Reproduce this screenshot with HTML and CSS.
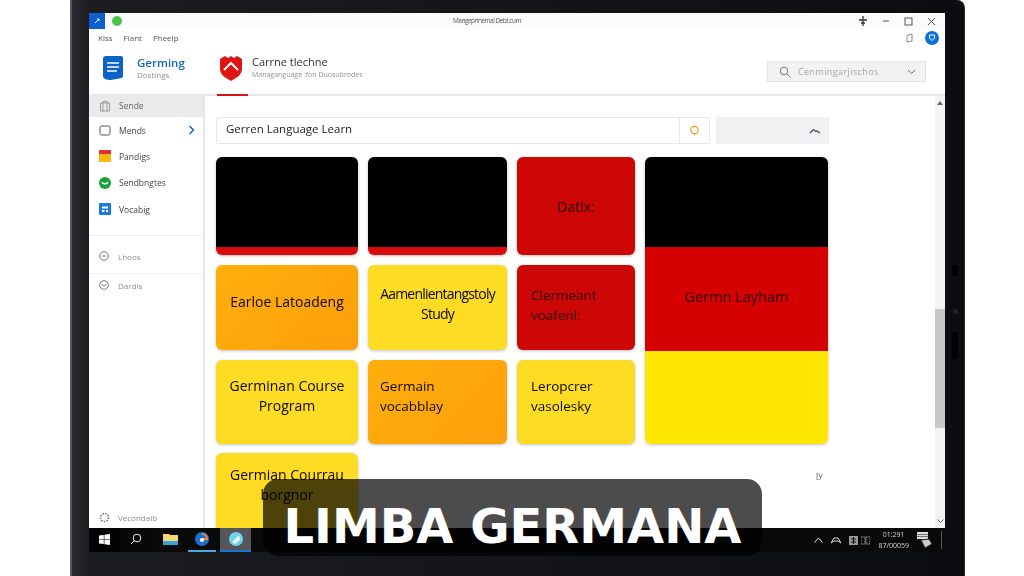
FILE: index.html
```html
<!DOCTYPE html>
<html lang="en">
<head>
  <meta charset="UTF-8" />
  <title>Limba Germana</title>
  <link rel="stylesheet" href="styles.css">
</head>
<body>
  <div class="laptop">
    <span class="port port-small"></span>
    <span class="port port-dot"></span>
    <span class="port port-long"></span>
    <div class="screen">
      <div class="titlebar">
        <div class="title-left">
          <span class="app-chip"><svg width="8" height="8" viewBox="0 0 8 8"><path d="M2 6 6 2M4 2h2v2" stroke="#fff" fill="none"/></svg></span>
          <span class="green-dot"></span>
        </div>
        <div class="title-text">Mangeprinemal Debt.cum</div>
        <div class="title-right">
          <svg width="10" height="10" viewBox="0 0 10 10"><path d="M5 0v10M1 4h8M3 7h4" stroke="#333" stroke-width="1.3" fill="none"/></svg>
          <svg width="8" height="8" viewBox="0 0 8 8"><path d="M1 4h6" stroke="#555" stroke-width="1"/></svg>
          <svg width="9" height="9" viewBox="0 0 9 9"><rect x="1" y="1" width="7" height="7" stroke="#555" fill="none"/></svg>
          <svg width="9" height="9" viewBox="0 0 9 9"><path d="M1 1l7 7M8 1 1 8" stroke="#555" fill="none"/></svg>
        </div>
      </div>

      <div class="menubar">
        <div class="menu-items"><span>Kiss</span><span>Fiant</span><span>Pheelp</span></div>
        <div class="menu-right">
          <svg width="9" height="10" viewBox="0 0 9 10"><path d="M2 2.500 7 1v7L2 9z" stroke="#888" fill="none"/></svg>
          <span class="avatar"><svg width="6" height="7" viewBox="0 0 6 7"><path d="M.5 1h5v3L3 6.500.5 4z" stroke="#fff" fill="none"/></svg></span>
        </div>
      </div>

      <div class="header">
        <div class="brand">
          <svg width="20" height="24" viewBox="0 0 20 24"><path d="M3 0h15a2 2 0 0 1 2 2v18c0 2-2 2-4 2.500L8 24c-4 0-8-1-8-4V3a3 3 0 0 1 3-3z" fill="#0b63c5"/><path d="M4 7h12M4 11h12M4 15h10" stroke="#fff" stroke-width="1.600"/></svg>
          <div>
            <div class="brand-name">Germing</div>
            <div class="brand-sub">Dostings</div>
          </div>
        </div>
        <div class="course-tab">
          <svg width="24" height="27" viewBox="0 0 24 27"><path d="M1 4 6 1l3 2 3-2 3 2 3-2 5 3v10c0 6-6 9-11 12C7 23 1 20 1 14z" fill="#dc1414"/><path d="M5 15l7-7 7 7" stroke="#fff" stroke-width="2" fill="none"/></svg>
          <div>
            <div class="course-name">Carrne tlechne</div>
            <div class="course-sub">Managanguage :fon Duosubrodes</div>
          </div>
        </div>
        <div class="header-search">
          <svg width="12" height="12" viewBox="0 0 12 12"><circle cx="5" cy="5" r="3.800" stroke="#777" fill="none"/><path d="M8 8l3.500 3.500" stroke="#777"/></svg>
          <span>Cenmingarjischos</span>
          <svg class="chev" width="9" height="6" viewBox="0 0 9 6"><path d="M1 1l3.500 3.500L8 1" stroke="#666" fill="none"/></svg>
        </div>
      </div>

      <div class="app">
        <aside class="sidebar">
          <div class="side-item active"><svg width="12" height="12" viewBox="0 0 12 12"><path d="M1.500 3h9v8h-9zM4 3V1.500h4V3M4 3v8M8 3v8" stroke="#999" fill="none"/></svg><span>Sende</span></div>
          <div class="side-item dark"><svg width="12" height="11" viewBox="0 0 12 11"><rect x="1" y="1" width="10" height="9" rx="1.500" stroke="#555" fill="none"/></svg><span>Mends</span><svg class="side-chev" width="7" height="10" viewBox="0 0 7 10"><path d="M1.500 1l4 4-4 4" stroke="#1565c0" stroke-width="1.500" fill="none"/></svg></div>
          <div class="side-item dark"><span class="flag-icon"></span><span>Pandigs</span></div>
          <div class="side-item dark"><svg width="12" height="12" viewBox="0 0 12 12"><circle cx="6" cy="6" r="6" fill="#17a33b"/><path d="M3 5c1 2.500 5 2.500 6 0" stroke="#fff" stroke-width="1.500" fill="none"/></svg><span>Sendbngtes</span></div>
          <div class="side-item dark"><svg width="12" height="12" viewBox="0 0 12 12"><rect width="12" height="12" rx="1" fill="#1a7ae2"/><path d="M3 3.500h6v2H3zM3 7h2.500v2H3zM7 7h2v2H7z" fill="#fff"/></svg><span>Vocabig</span></div>
          <div class="side-group">
            <div class="side-item small"><svg width="10" height="10" viewBox="0 0 10 10"><circle cx="5" cy="5" r="4.300" stroke="#777" fill="none"/><path d="M3 5h4" stroke="#777"/></svg><span>Lhoos</span></div>
          </div>
          <div class="side-group second">
            <div class="side-item small"><svg width="10" height="10" viewBox="0 0 10 10"><circle cx="5" cy="5" r="4.300" stroke="#777" fill="none"/><path d="M2.500 4 5 6l2.500-2" stroke="#777" fill="none"/></svg><span>Dardis</span></div>
          </div>
          <div class="side-foot"><svg width="11" height="11" viewBox="0 0 11 11"><circle cx="5.500" cy="5.500" r="4" stroke="#777" stroke-width="1.600" stroke-dasharray="1.500 1.200" fill="none"/></svg><span>Vecondalb</span></div>
        </aside>

        <main class="main">
          <div class="search-row">
            <div class="search-box">
              <span class="search-text">Gerren Language Learn</span>
              <span class="search-btn"><svg width="11" height="11" viewBox="0 0 11 11"><circle cx="5.500" cy="5" r="3.700" stroke="#f09a10" stroke-width="1.200" fill="none"/><path d="M5.500 9v1.500" stroke="#f09a10"/></svg></span>
            </div>
            <div class="sort-box"><svg width="12" height="6" viewBox="0 0 12 6"><path d="M1 5 4.500 1.500 7 3.500 8 3l3 2" stroke="#445" stroke-width="1.100" fill="none"/></svg></div>
          </div>

          <div class="cards">
            <div class="card black"></div>
            <div class="card black"></div>
            <div class="card red">Datlx:</div>
            <div class="card flag">
              <div class="flag-black"></div>
              <div class="flag-red">Germn Layham</div>
              <div class="flag-yellow"></div>
            </div>
            <div class="card raised orange">Earloe Latoadeng</div>
            <div class="card raised-more yellow tight">Aamenlientangstoly Study</div>
            <div class="card raised-more red left">Clermeant voafenl:</div>
            <div class="card raised yellow">Germinan Course Program</div>
            <div class="card raised orange left">Germain vocabblay</div>
            <div class="card raised yellow left">Leropcrer vasolesky</div>
            <div class="card yellow last">Germian Courrau borgnor</div>
          </div>
          <span class="cursor-mark">[y</span>
        </main>

        <div class="scrollbar">
          <svg width="6" height="4" viewBox="0 0 6 4"><path d="M0 4 3 0l3 4z" fill="#666"/></svg>
          <div class="thumb"></div>
          <svg width="7" height="4" viewBox="0 0 7 4"><path d="M.5.500 3.500 3.500 6.500.5" stroke="#666" fill="none"/></svg>
        </div>
      </div>

      <div class="taskbar">
        <div class="task-btn start"><svg width="11" height="11" viewBox="0 0 11 11"><path d="M0 1.600 4.800.9v4.300H0zM5.400.8 11 0v5.200H5.400zM0 5.800h4.800v4.300L0 9.400zM5.400 5.800H11V11l-5.600-.8z" fill="#fff"/></svg></div>
        <div class="task-btn search"><svg width="12" height="12" viewBox="0 0 12 12"><circle cx="7" cy="5" r="3.800" stroke="#eee" fill="none"/><path d="M4.200 7.800 1 11" stroke="#eee"/></svg></div>
        <div class="task-btn folder"><svg width="15" height="12" viewBox="0 0 15 12"><path d="M0 1h6l1 1h8v10H0z" fill="#f5d774"/><path d="M0 8h15v4H0z" fill="#3aa0d8"/></svg></div>
        <div class="task-btn edge running"><svg width="14" height="14" viewBox="0 0 14 14"><circle cx="7" cy="7" r="7" fill="#1b6fd0"/><path d="M7 2a5 5 0 0 1 5 5H6" stroke="#f08a24" stroke-width="2" fill="none"/><circle cx="7" cy="8" r="2" fill="#fff"/></svg></div>
        <div class="task-btn globe running current"><svg width="14" height="14" viewBox="0 0 14 14"><circle cx="7" cy="7" r="7" fill="#6fd3ee"/><path d="M3 10 10 3l1 5-5 4z" fill="#e8f7fc"/></svg></div>
        <div class="tray">
          <svg width="9" height="6" viewBox="0 0 9 6"><path d="M.5 5.500 4.500 1l4 4.500" stroke="#eee" fill="none"/></svg>
          <svg width="10" height="7" viewBox="0 0 10 7"><path d="M0 6 3 1h4l3 5-3-2H3z" stroke="#ddd" fill="none"/></svg>
          <svg width="9" height="9" viewBox="0 0 9 9"><path d="M0 0h9v9H0z" fill="#999"/><path d="M2 3h5M2 6h5M4.500 1v7" stroke="#111"/></svg>
          <svg class="tray-near" width="9" height="9" viewBox="0 0 9 9"><path d="M0 1h4v7H0zM5 1h4v7H5z" fill="none" stroke="#aaa" stroke-dasharray="1 .6"/></svg>
          <div class="clock"><span>01:291</span><span>87/00059</span></div>
          <svg width="16" height="18" viewBox="0 0 16 18"><path d="M0 1h11v7H0z" fill="#ddd"/><path d="M0 3.500h11M0 5.500h11" stroke="#444" stroke-width=".7"/><path d="M4 9l8-1 3 5-7 4z" fill="#ccc" stroke="#222"/></svg>
        </div>
      </div>
    </div>
  </div>

  <div class="caption">LIMBA GERMANA</div>
</body>
</html>
```
FILE: styles.css
```css
* {
  box-sizing: border-box;
}
html, body {
  margin: 0;
  height: 576px;
  overflow: hidden;
}
body {
  position: relative;
  width: 1024px;
  background: #fff;
  font-family: "Open Sans", "Noto Sans", sans-serif;
  color: #333;
}
svg {
  display: block;
  flex: none;
}
.laptop {
  width: 895px;
  height: 576px;
  margin-left: 70px;
  padding: 13px 20px 0 19px;
  background: linear-gradient(90deg, #2a2b2f 0, #1c1d20 2%, #141518 50%, #0c0d10 100%);
  border-left: 2px solid #55565a;
  border-right: 1px solid #2c2d30;
  border-top-right-radius: 8px;
}
.laptop .screen {
  margin-left: -2px;
}
.port {
  position: absolute;
  left: 952px;
  width: 6px;
  background: #000;
  border-radius: 2px;
}
.port-small {
  top: 265px;
  height: 11px;
}
.port-dot {
  left: 953px;
  top: 309px;
  width: 5px;
  height: 5px;
  background: #24252a;
  border-radius: 50%;
}
.port-long {
  top: 332px;
  height: 27px;
}
.screen {
  width: 856px;
  height: 539px;
  display: flex;
  flex-direction: column;
  background: #fff;
  filter: blur(0.3px);
}

.titlebar {
  height: 16px;
  flex: none;
  display: flex;
  align-items: center;
  justify-content: space-between;
  background: #fbfbfb;
  position: relative;
}
.title-left {
  display: flex;
  align-items: center;
  gap: 7px;
}
.app-chip {
  width: 16px;
  height: 16px;
  background: #0b5fd0;
  display: flex;
  align-items: center;
  justify-content: center;
}
.green-dot {
  width: 10px;
  height: 10px;
  border-radius: 50%;
  background: #4cc44e;
}
.title-text {
  font-size: 6.5px;
  letter-spacing: -0.5px;
  color: #555;
  position: absolute;
  left: 364px;
  top: 3px;
}
.title-right {
  display: flex;
  align-items: center;
  gap: 14px;
  padding-right: 9px;
}

.menubar {
  height: 19px;
  flex: none;
  display: flex;
  align-items: center;
  justify-content: space-between;
  padding: 0 6px 2px 9px;
}
.menu-items {
  display: flex;
  gap: 11px;
  font-size: 8px;
  color: #555;
}
.menu-right {
  display: flex;
  align-items: center;
  gap: 11px;
}
.avatar {
  width: 14px;
  height: 14px;
  border-radius: 50%;
  background: #0d6fd8;
  display: flex;
  align-items: center;
  justify-content: center;
}

.header {
  height: 48px;
  flex: none;
  display: flex;
  align-items: flex-start;
  padding: 7px 19px 0 14px;
  border-bottom: 2px solid #e6e7e8;
}
.brand {
  display: flex;
  gap: 14px;
  width: 114px;
  padding-top: 1px;
}
.brand-name {
  font-size: 11.5px;
  font-weight: 600;
  color: #1268bd;
  line-height: 14px;
}
.brand-sub {
  font-size: 8px;
  color: #8a8f95;
  line-height: 10px;
}
.course-tab {
  display: flex;
  gap: 9px;
  height: 41px;
  padding: 0 0 0 2px;
  position: relative;
}
.course-tab::after {
  content: "";
  position: absolute;
  left: 0;
  bottom: 0;
  width: 31px;
  height: 2px;
  background: #d91616;
}
.course-name {
  font-size: 11px;
  color: #333;
  line-height: 14px;
}
.course-sub {
  font-size: 7px;
  color: #8d9094;
  line-height: 10px;
  margin-top: 1px;
}
.header-search {
  margin-left: auto;
  margin-top: 6px;
  width: 159px;
  height: 21px;
  display: flex;
  align-items: center;
  gap: 7px;
  padding: 0 9px 0 11px;
  background: #f1f2f3;
  border: 1px solid #e2e3e5;
  font-size: 9px;
  letter-spacing: 0.4px;
  color: #a4a7aa;
}
.header-search .chev {
  margin-left: auto;
}

.app {
  flex: 1;
  min-height: 0;
  display: flex;
}
.sidebar {
  width: 116px;
  flex: none;
  display: flex;
  flex-direction: column;
  border-right: 2px solid #e4e5e7;
  font-size: 8.5px;
  color: #666;
}
.side-item {
  height: 26.3px;
  flex: none;
  display: flex;
  align-items: center;
  gap: 8px;
  padding-left: 10px;
}
.side-item.active {
  height: 21px;
  padding-bottom: 2px;
  background: #e9eaec;
}
.side-item.dark {
  color: #444;
}
.side-item.small {
  height: 22px;
  color: #8a8c8f;
  font-size: 8px;
  gap: 9px;
}
.side-chev {
  margin-left: auto;
  margin-right: 8px;
}
.flag-icon {
  width: 12px;
  height: 12px;
  flex: none;
  background: linear-gradient(#e03030 33%, #fbb610 33%);
}
.side-group {
  margin-top: 13px;
  padding-top: 9px;
  border-top: 1px solid #f0f0f1;
}
.side-group.second {
  margin-top: 6px;
  padding-top: 0;
}
.side-foot {
  margin-top: auto;
  height: 22px;
  display: flex;
  align-items: center;
  gap: 8px;
  padding-left: 10px;
  font-size: 8px;
  color: #8a8c8f;
}

.main {
  flex: 1;
  min-width: 0;
  overflow: hidden;
  position: relative;
  padding: 21px 0 0 11px;
}
.search-row {
  display: flex;
  gap: 6px;
  margin-bottom: 13px;
}
.search-box {
  width: 494px;
  height: 27px;
  display: flex;
  align-items: center;
  justify-content: space-between;
  background: #fff;
  border: 1px solid #e6e7e8;
  border-radius: 2px;
  padding-left: 9px;
}
.search-text {
  font-size: 11.5px;
  color: #222;
  padding-bottom: 5px;
}
.search-btn {
  width: 30px;
  height: 100%;
  display: flex;
  align-items: center;
  justify-content: center;
  border-left: 1px solid #e6e7e8;
}
.sort-box {
  width: 113px;
  height: 27px;
  display: flex;
  align-items: center;
  justify-content: flex-end;
  padding-right: 8px;
  background: #f0f1f2;
}

.cards {
  display: grid;
  grid-template-columns: 142px 139px 118px 183px;
  grid-template-rows: 98px 85px 84px 100px;
  gap: 10px;
}
.card {
  display: flex;
  align-items: center;
  justify-content: center;
  padding: 0 12px;
  border-radius: 6px;
  text-align: center;
  font-size: 14px;
  line-height: 20px;
  color: #0c0900;
  box-shadow: 0 1px 3px rgba(0, 0, 0, 0.25);
}
.card.raised {
  padding-bottom: 12px;
}
.card.raised-more {
  padding-bottom: 7px;
}
.card.left {
  justify-content: flex-start;
  text-align: left;
  font-size: 13.5px;
}
.card.red.left,
.card.yellow.left {
  padding-left: 14px;
}
.card.tight {
  letter-spacing: -0.8px;
}
.black {
  background: linear-gradient(#000 90px, #d80a0a 90px);
}
.red {
  padding-top: 2px;
  background: #cd0606;
  color: #2a0000;
}
.orange {
  background: linear-gradient(135deg, #ffaf0c, #fd9f0a);
}
.yellow {
  background: #ffdc24;
}
.last {
  align-items: flex-start;
  margin-top: -1px;
  padding-top: 12px;
}
.flag {
  grid-column: 4;
  grid-row: 1 / span 3;
  display: flex;
  flex-direction: column;
  align-items: stretch;
  padding: 0;
  overflow: hidden;
}
.flag-black {
  height: 90px;
  background: #000;
}
.flag-red {
  height: 104px;
  display: flex;
  align-items: center;
  justify-content: center;
  padding-bottom: 4px;
  background: #d60202;
  font-size: 14.500px;
  color: #2a0000;
}
.flag-yellow {
  flex: 1;
  background: #ffe600;
}
.cursor-mark {
  position: absolute;
  left: 611px;
  top: 373px;
  font-size: 8px;
  color: #555;
}

.scrollbar {
  width: 10px;
  flex: none;
  display: flex;
  flex-direction: column;
  align-items: center;
  background: #f3f3f3;
  padding: 5px 0 5px;
}
.thumb {
  width: 100%;
  height: 119px;
  margin-top: 204px;
  margin-bottom: auto;
  background: #c8c8c8;
}

.taskbar {
  height: 24px;
  flex: none;
  display: flex;
  align-items: stretch;
  background: #0a0a0b;
}
.task-btn {
  width: 32px;
  display: flex;
  align-items: center;
  justify-content: center;
  border-bottom: 2px solid transparent;
}
.task-btn.start {
  width: 30px;
  background: #020203;
}
.task-btn.search {
  width: 33px;
  background: #060607;
}
.task-btn.folder {
  width: 36px;
}
.task-btn.running {
  width: 28px;
  border-bottom-color: #4aa8e0;
}
.task-btn.current {
  width: 31px;
  margin-left: 4px;
  background: #55565a;
  border-bottom-color: #1b72d8;
}
.tray {
  margin-left: auto;
  display: flex;
  align-items: center;
  gap: 8px;
  padding-right: 3px;
}
.tray-near {
  margin-left: -5px;
}
.clock {
  display: flex;
  flex-direction: column;
  align-items: center;
  font-size: 7px;
  line-height: 11px;
  color: #d5d5d5;
}
.tray::after {
  content: "";
  width: 1px;
  height: 18px;
  background: #55565a;
}

.caption {
  position: absolute;
  left: 263px;
  top: 479px;
  width: 499px;
  height: 77px;
  display: flex;
  align-items: center;
  justify-content: center;
  padding-top: 16px;
  border-radius: 15px;
  background: rgba(0, 0, 0, 0.7);
  font-family: "DejaVu Sans", sans-serif;
  font-weight: 700;
  font-size: 48px;
  color: #fff;
}
```
